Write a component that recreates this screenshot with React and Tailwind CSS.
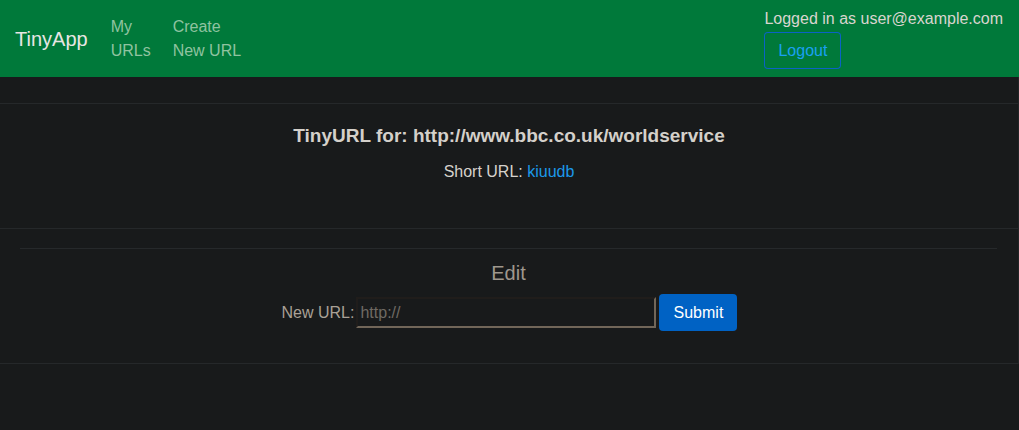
import React from "react";

function App() {
  return (
    <div className="min-h-screen bg-[#181a1b] font-['Liberation_Sans',Arial,sans-serif] text-[#d6d2cc]">
      {/* Navbar */}
      <nav className="h-[77px] bg-[#00793a] flex items-start justify-between px-[15px]">
        <div className="flex items-center h-full">
          <span className="text-[20px] text-[#e8e6e3] mr-[23px]">TinyApp</span>
          <div className="flex gap-[21px] text-[16px] leading-[24px] text-[#8fc3a0]">
            <a href="#" className="block w-[41px]">My<br />URLs</a>
            <a href="#" className="block">Create<br />New URL</a>
          </div>
        </div>
        <div className="pt-[7px] mr-[1px] flex flex-col items-start">
          <span className="text-[16px] leading-[24px] text-[#d9d5cf]">Logged in as user@example.com</span>
          <a
            href="#"
            className="mt-[1px] w-[77px] h-[37px] flex items-center justify-center text-[16px] text-[#1ba0f2] rounded-[4px] shadow-[inset_0_0_0_1px_#0b62c6]"
          >
            Logout
          </a>
        </div>
      </nav>

      {/* Main */}
      <main className="pt-[26px] border-r border-[#222426]">
        <section className="h-[125px] border-t border-[#25282a] flex flex-col items-center pt-[20px]">
          <h5 className="text-[19px] leading-[24px] font-bold text-[#d4d0ca]">
            TinyURL for: http://www.bbc.co.uk/worldservice
          </h5>
          <p className="mt-[12px] text-[16px] leading-[24px] text-[#d6d2cc]">
            Short URL: <a href="#" className="text-[#1c99ea]">kiuudb</a>
          </p>
        </section>

        <section className="border-t border-b border-[#25282a] pt-[19px] pb-[32px] px-[20px]">
          <div className="border-t border-[#26292b] mr-[1px] flex flex-col items-center pt-[12px]">
            <h3 className="text-[20px] leading-[24px] text-[#9f978d]">Edit</h3>
            <form className="mt-[9px] ml-[2px] flex items-center">
              <label className="text-[16px] text-[#a9a196] mr-[2px]">New URL:</label>
              <input
                type="text"
                placeholder="http://"
                className="w-[300px] h-[31px] bg-[#181a1b] px-[2px] text-[16px] text-[#d6d2cc] placeholder:text-[#6f6a63] border-2 border-t-[#201d1b] border-l-[#201d1b] border-b-[#716659] border-r-[#716659] outline-none"
              />
              <button type="button" className="ml-[3px] h-[37px] w-[78px] bg-[#0062c4] text-white text-[16px] rounded-[4px]">
                Submit
              </button>
            </form>
          </div>
        </section>
      </main>
    </div>
  );
}

export default App;
